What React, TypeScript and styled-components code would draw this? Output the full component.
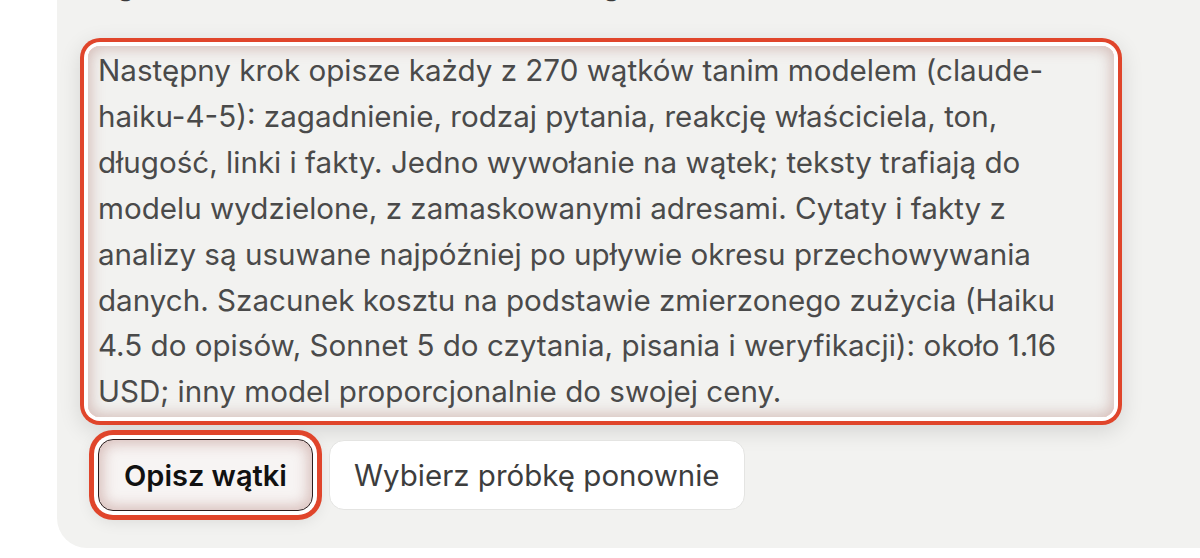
import React from "react";
import styled, { createGlobalStyle } from "styled-components";

const Global = createGlobalStyle`
  html, body { margin: 0; padding: 0; background: #ffffff; overflow: hidden; }
  body { font-family: Inter, "Noto Sans", "Liberation Sans", sans-serif; }
  * { box-sizing: border-box; }
`;

const Page = styled.div`
  width: 1200px;
  height: 558px;
  overflow: hidden;
  background: #ffffff;
`;

const Panel = styled.section`
  margin-left: 57px;
  margin-right: -40px;
  height: 548px;
  background: #f2f2f0;
  border-radius: 0 0 0 30px;
  padding: 0 126px 36px 31px;
  display: flex;
  flex-direction: column;
`;

const Hint = styled.p`
  margin: -39px 0 39px 10px;
  font-size: 29.6px;
  line-height: 46px;
  color: #3a3a3a;
  white-space: nowrap;
`;

const Highlight = styled.div`
  border-radius: 12px;
  box-shadow:
    0 0 0 4px #ffffff,
    0 0 0 8px #e0452b,
    0 6px 22px 8px rgba(0, 0, 0, 0.12);
`;

const Notice = styled.div`
  border-radius: 12px;
  padding: 2px 10px;
  background: #f2f2f0;
  box-shadow: inset 0 0 14px 3px rgba(160, 95, 85, 0.35);
  font-size: 29.6px;
  line-height: 45.9px;
  color: #4a4a4a;
`;

const Actions = styled.div`
  display: flex;
  gap: 16px;
  margin-top: 22px;
  align-items: center;
`;

const Button = styled.button<{ $primary?: boolean }>`
  height: ${(p) => (p.$primary ? "72px" : "70px")};
  padding: 0 ${(p) => (p.$primary ? "25px" : "24px")};
  border-radius: 15px;
  font-family: Inter, "Noto Sans", "Liberation Sans", sans-serif;
  font-size: ${(p) => (p.$primary ? "29px" : "29.5px")};
  font-weight: ${(p) => (p.$primary ? 600 : 400)};
  color: ${(p) => (p.$primary ? "#111111" : "#3d3d3d")};
  background: ${(p) => (p.$primary ? "#f7f4f3" : "#ffffff")};
  border: ${(p) => (p.$primary ? "1.5px solid #2a1d1d" : "1px solid #e4e4e2")};
  box-shadow: ${(p) =>
    p.$primary
      ? "inset 0 0 14px 4px rgba(160, 95, 85, 0.35), 0 0 0 4px #ffffff, 0 0 0 9px #e0452b, 0 4px 16px 6px rgba(0,0,0,0.1)"
      : "none"};
  margin-left: ${(p) => (p.$primary ? "10px" : "0")};
  cursor: pointer;
`;

export default function App() {
  return (
    <Page>
      <Global />
      <Panel>
        <Hint>Zgoda została udzielona w całości zgodnie z ustawieniami</Hint>
        <Highlight>
          <Notice>
            Następny krok opisze każdy z 270 wątków tanim modelem (claude-haiku-4-5): zagadnienie, rodzaj
            pytania, reakcję właściciela, ton, długość, linki i fakty. Jedno wywołanie na wątek; teksty
            trafiają do modelu wydzielone, z zamaskowanymi adresami. Cytaty i fakty z analizy są usuwane
            najpóźniej po upływie okresu przechowywania danych. Szacunek kosztu na podstawie zmierzonego
            zużycia (Haiku 4.5 do opisów, Sonnet 5 do czytania, pisania i weryfikacji): około 1.16 USD; inny
            model proporcjonalnie do swojej ceny.
          </Notice>
        </Highlight>
        <Actions>
          <Button $primary>Opisz wątki</Button>
          <Button>Wybierz próbkę ponownie</Button>
        </Actions>
      </Panel>
    </Page>
  );
}
